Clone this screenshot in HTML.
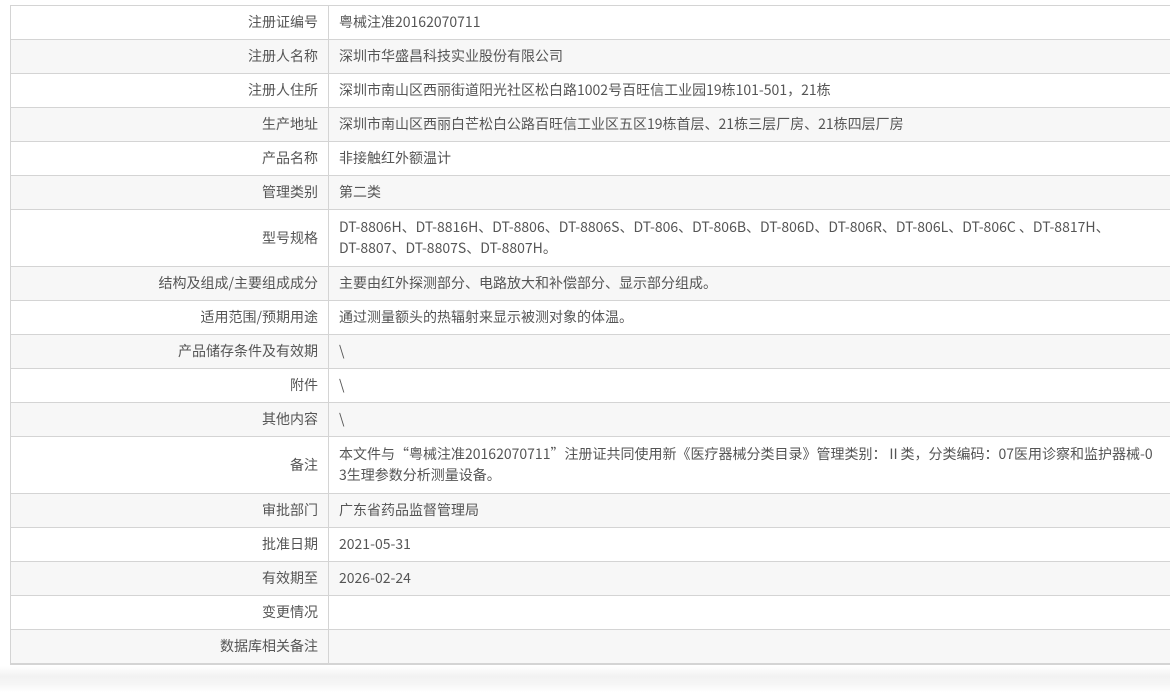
<!DOCTYPE html>
<html><head><meta charset="utf-8"><style>
body{margin:0;background:#fff;width:1170px;height:699px;overflow:hidden;position:relative;font-family:"Noto Sans CJK SC","Liberation Sans",sans-serif;font-size:14px;color:#555}
table{position:absolute;left:10px;top:5px;width:1180px;border-collapse:collapse;border-left:1px solid #d4d4d4;border-top:1px solid #d4d4d4;border-bottom:2px solid #d4d4d4}
td{border-bottom:1px solid #d4d4d4;height:33px;padding:0 10px;line-height:21px;white-space:nowrap}
td.l{width:297px;text-align:right;border-right:1px solid #d4d4d4}
tr:nth-child(even) td{background:#f7f7f7}
tr.t td{height:56px}
.sh{position:absolute;left:0;top:666px;width:1170px;height:26px;background:linear-gradient(#fff,#f2f2f2 40%,#f6f6f6 70%,#fff)}
</style></head><body>
<table>
<tr><td class="l">注册证编号</td><td>粤械注准20162070711</td></tr>
<tr><td class="l">注册人名称</td><td>深圳市华盛昌科技实业股份有限公司</td></tr>
<tr><td class="l">注册人住所</td><td>深圳市南山区西丽街道阳光社区松白路1002号百旺信工业园19栋101-501，21栋</td></tr>
<tr><td class="l">生产地址</td><td>深圳市南山区西丽白芒松白公路百旺信工业区五区19栋首层、21栋三层厂房、21栋四层厂房</td></tr>
<tr><td class="l">产品名称</td><td>非接触红外额温计</td></tr>
<tr><td class="l">管理类别</td><td>第二类</td></tr>
<tr class="t"><td class="l">型号规格</td><td>DT-8806H、DT-8816H、DT-8806、DT-8806S、DT-806、DT-806B、DT-806D、DT-806R、DT-806L、DT-806C 、DT-8817H、<br>DT-8807、DT-8807S、DT-8807H。</td></tr>
<tr><td class="l">结构及组成/主要组成成分</td><td>主要由红外探测部分、电路放大和补偿部分、显示部分组成。</td></tr>
<tr><td class="l">适用范围/预期用途</td><td>通过测量额头的热辐射来显示被测对象的体温。</td></tr>
<tr><td class="l">产品储存条件及有效期</td><td>\</td></tr>
<tr><td class="l">附件</td><td>\</td></tr>
<tr><td class="l">其他内容</td><td>\</td></tr>
<tr class="t"><td class="l">备注</td><td>本文件与“粤械注准20162070711”注册证共同使用新《医疗器械分类目录》管理类别：Ⅱ类，分类编码：07医用诊察和监护器械-0<br>3生理参数分析测量设备。</td></tr>
<tr><td class="l">审批部门</td><td>广东省药品监督管理局</td></tr>
<tr><td class="l">批准日期</td><td>2021-05-31</td></tr>
<tr><td class="l">有效期至</td><td>2026-02-24</td></tr>
<tr><td class="l">变更情况</td><td></td></tr>
<tr><td class="l">数据库相关备注</td><td></td></tr>
</table>
<div class="sh"></div>
</body></html>
